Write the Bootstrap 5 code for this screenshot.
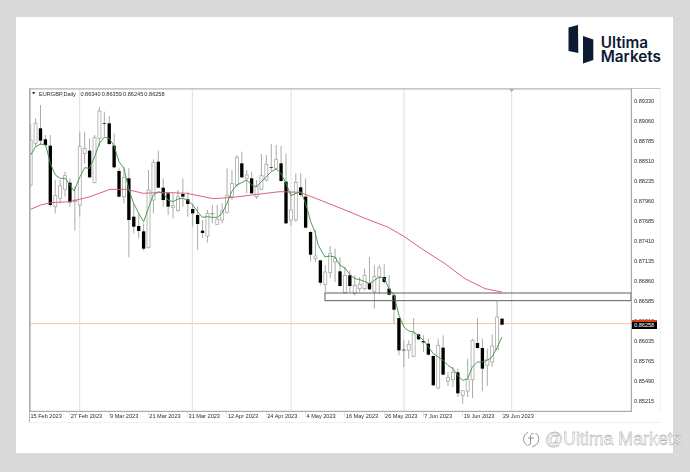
<!DOCTYPE html>
<html lang="en">
<head>
    <meta charset="UTF-8">
    <meta name="viewport" content="width=device-width, initial-scale=1.0">
    <title>EURGBP Daily</title>
    <link href="https://cdn.jsdelivr.net/npm/bootstrap@5.3.0/dist/css/bootstrap.min.css" rel="stylesheet">
    <script src="https://cdn.jsdelivr.net/npm/bootstrap@5.3.0/dist/js/bootstrap.bundle.min.js"></script>
    <style>
        body {
            background: #d9d9d9;
            width: 690px;
            height: 472px;
            overflow: hidden;
            padding: 17px 0 0 16px;
        }
        .sheet {
            width: 657px;
            height: 436px;
            background: #fff;
            padding: 0 12px 0 13px;
        }
        .sheet-head { height: 71px; padding-top: 7px; }
        .logo-name {
            font-family: Inter, "Liberation Sans", sans-serif;
            font-weight: 600;
            font-size: 15.3px;
            line-height: 13.6px;
            color: #0d1a33;
            margin: 12px 0 0 7px;
        }
        .chart-body { height: 324px; filter: blur(0.25px); }
        .chart-svg { display: block; width: 603px; height: 324px; }
        .mt-text {
            font-family: "Liberation Sans", Arial, sans-serif;
            font-size: 5.6px;
            color: #2b2b2b;
            white-space: nowrap;
        }
        .chart-title { position: absolute; left: 10px; top: 2px; line-height: 8px; }
        .chart-title span { margin-right: 1.1px; }
        .title-gap { margin-left: 3.4px; }
        .price-axis {
            width: 29px;
            padding: 3px 0 0 2px;
            border-top: 1px solid #c4c4c4;
            border-right: 1px solid #f2f2f2;
        }
        .price-row { height: 20px; line-height: 19px; }
        .price-tag {
            position: absolute;
            left: 0;
            top: 231px;
            width: 24.5px;
            height: 8.5px;
            background: #000;
            border-top: 2px solid #e2400f;
            color: #fff;
            line-height: 6.5px;
            padding-left: 2px;
        }
        .date-axis {
            height: 11px;
            border-left: 1px solid #b5b5b5;
            border-bottom: 1px solid #f0f0f0;
            width: 632px;
            filter: blur(0.2px);
        }
        .date-cell {
            width: 39.3px;
            height: 5px;
            flex: none;
            line-height: 9px;
            padding-left: 0.4px;
            border-left: 1px solid #e4e4e4;
        }
        .date-cell:first-child { border-left: 0; }
        .watermark {
            position: absolute;
            left: 523px;
            top: 429px;
            gap: 5px;
        }
        .watermark span {
            font-family: "Liberation Sans", Arial, sans-serif;
            font-size: 17.8px;
            line-height: 20px;
            color: #fff;
            -webkit-text-stroke: 0.32px #7a7a7a;
            white-space: nowrap;
        }
    </style>
</head>
<body>
    <div class="sheet">
        <div class="sheet-head d-flex justify-content-end">
            <svg width="26" height="40" viewBox="0 0 26 40">
                <polygon points="0.5,3.5 10,1 10.3,29 0.5,27" fill="#0d1a33"/>
                <polygon points="15,12 25.3,15.5 25.3,36 15,39.5" fill="#0d1a33"/>
            </svg>
            <div class="logo-name">Ultima<br>Markets</div>
        </div>

        <div class="chart-body d-flex">
            <div class="position-relative">
                <svg id="chart" class="chart-svg" viewBox="87 264 1809 972"></svg>
                <div class="chart-title mt-text"><span>EURGBP,Daily</span><span class="title-gap">0.86340</span><span>0.86359</span><span>0.86245</span><span>0.86258</span></div>
            </div>
            <div class="price-axis mt-text flex-grow-1 position-relative">
                <div class="price-row">0.89330</div>
                <div class="price-row">0.89060</div>
                <div class="price-row">0.88785</div>
                <div class="price-row">0.88510</div>
                <div class="price-row">0.88235</div>
                <div class="price-row">0.87960</div>
                <div class="price-row">0.87685</div>
                <div class="price-row">0.87410</div>
                <div class="price-row">0.87135</div>
                <div class="price-row">0.86860</div>
                <div class="price-row">0.86585</div>
                <div class="price-row">0.86310</div>
                <div class="price-row">0.86035</div>
                <div class="price-row">0.85765</div>
                <div class="price-row">0.85490</div>
                <div class="price-row">0.85215</div>
                <div class="price-tag">0.86258</div>
            </div>
        </div>

        <div class="date-axis mt-text d-flex">
            <div class="date-cell">15 Feb 2023</div>
            <div class="date-cell">27 Feb 2023</div>
            <div class="date-cell">9 Mar 2023</div>
            <div class="date-cell">21 Mar 2023</div>
            <div class="date-cell">31 Mar 2023</div>
            <div class="date-cell">12 Apr 2023</div>
            <div class="date-cell">24 Apr 2023</div>
            <div class="date-cell">4 May 2023</div>
            <div class="date-cell">16 May 2023</div>
            <div class="date-cell">26 May 2023</div>
            <div class="date-cell">7 Jun 2023</div>
            <div class="date-cell">19 Jun 2023</div>
            <div class="date-cell">29 Jun 2023</div>
        </div>
    </div>

    <div class="watermark d-flex align-items-center">
        <svg width="17" height="18" viewBox="0 0 17 18" fill="none" stroke="#8a8a8a" stroke-width="0.9">
            <path d="M5 2.5 A7.2 7.2 0 0 0 4.5 15.5 M12.5 3 A7.2 7.2 0 0 1 12 15.5 L9 17"/>
            <path d="M10.5 3.5 C8 3 7.5 5 7.5 7 L7.5 13 C7.5 15 6 15.5 5 14.5 M5 8 L11 8"/>
        </svg>
        <span>@Ultima Markets</span>
    </div>

    <script>
        // hi, body top, body bottom, lo, black?  (coordinates of the 3x reference)
        const candles = [
            [372,420,555,560,0],[355,370,430,440,0],[315,385,422,435,1],[405,418,435,440,1],[405,437,615,620,1],
            [540,587,620,640,0],[540,557,595,610,0],[515,527,568,590,0],[535,548,607,620,1],[560,600,605,692,0],
            [395,440,615,650,0],[395,445,460,490,0],[415,452,532,535,1],[405,413,548,550,0],[322,333,415,440,0],
            [335,370,372,410,1],[348,370,432,435,1],[400,437,502,505,1],[505,513,590,592,1],[500,532,590,610,0],
            [505,535,660,772,1],[610,650,680,700,1],[640,678,693,714,1],[670,694,746,752,1],[510,570,742,746,0],
            [478,487,600,640,0],[452,485,563,565,1],[535,563,600,620,1],[575,580,620,645,1],[580,617,622,655,0],
            [570,590,632,635,0],[535,582,590,620,1],[575,598,612,650,1],[610,627,640,680,1],[620,645,672,749,1],
            [660,692,699,714,1],[630,640,708,728,0],[615,640,642,670,0],[615,658,673,675,0],[610,633,660,670,0],
            [505,587,637,640,0],[510,550,590,600,0],[465,472,555,560,0],[455,490,532,535,1],[510,525,535,580,0],
            [515,535,580,582,1],[540,560,590,597,0],[462,527,568,570,0],[465,493,540,545,0],[432,501,503,515,1],
            [435,478,505,510,0],[438,490,543,545,1],[460,545,670,672,1],[575,630,660,678,0],[520,547,660,665,0],
            [520,562,585,590,1],[535,590,683,685,1],[692,696,764,784,1],[690,768,776,786,0],[781,781,848,856,1],
            [796,816,853,876,0],[738,761,818,835,0],[746,776,786,846,0],[771,814,858,861,1],[801,826,878,881,0],
            [811,826,858,876,1],[826,856,881,886,0],[831,853,866,876,0],[806,826,866,871,0],[771,849,868,871,1],
            [796,829,874,926,0],[794,804,831,881,0],[793,831,846,851,1],[826,866,884,886,1],[881,886,929,971,1],
            [954,954,1051,1066,1],[1021,1049,1051,1101,1],[1021,1033,1051,1076,0],[954,999,1069,1071,0],[1001,1003,1018,1021,1],
            [1006,1023,1027,1056,1],[1016,1031,1064,1066,1],[1066,1068,1156,1158,1],[1016,1036,1164,1166,0],[1006,1043,1124,1126,1],
            [1116,1132,1143,1158,0],[1101,1117,1139,1161,0],[1106,1117,1180,1191,1],[1171,1172,1186,1211,0],[1076,1139,1173,1191,0],
            [1016,1021,1139,1194,0],[954,1029,1044,1046,1],[1016,1044,1106,1174,1],[1046,1078,1096,1158,0],[1003,1038,1086,1101,0],
            [903,951,1048,1051,0],[954,956,974,976,1]
        ];

        const green = "92,465 107,440 122,432 137,435 151,490 166,525 181,535 196,535 210,555 222,573 240,530 254,503 268,505 284,470 298,430 313,412 328,415 343,440 357,485 372,505 387,570 401,610 416,640 431,665 445,625 460,585 475,575 490,580 504,600 519,605 534,597 548,595 563,600 578,615 593,635 607,652 622,650 637,652 652,652 666,640 681,610 695,575 710,555 725,548 740,540 755,555 769,560 784,545 799,530 814,515 828,507 843,520 858,550 873,587 888,580 902,575 917,610 932,665 945,696 955,736 975,771 990,768 1005,771 1020,796 1035,804 1050,824 1065,836 1079,839 1093,844 1108,851 1123,841 1138,831 1153,836 1167,866 1182,886 1197,946 1212,981 1226,993 1241,996 1255,1006 1270,1021 1285,1041 1300,1061 1315,1071 1329,1081 1344,1096 1359,1106 1373,1126 1388,1141 1403,1136 1417,1101 1432,1086 1447,1086 1462,1081 1476,1071 1492,1041 1506,1011";
        const red = "92,628 122,615 151,608 210,605 270,590 330,568 380,568 430,580 490,577 560,580 640,596 700,592 780,582 840,575 900,577 960,600 1035,630 1095,655 1165,682 1210,708 1265,746 1335,791 1395,836 1455,866 1505,876";

        let svg = "";
        // separators and order levels
        [239,577,873,1212,1535].forEach(x => {
            svg += `<line x1="${x}" y1="268" x2="${x}" y2="1233" stroke="#b4b4b4" stroke-width="2.6" stroke-dasharray="3 3"/>`;
        });
        svg += `<polygon points="1527,267 1543,267 1535,276" fill="#b0b0b0"/>`;
        svg += `<line x1="92" y1="971" x2="1893" y2="971" stroke="#f3c6a6" stroke-width="3"/>`;

        candles.forEach((c, i) => {
            const x = (92 + i * 14.73).toFixed(1);
            svg += `<line x1="${x}" y1="${c[0]}" x2="${x}" y2="${c[3]}" stroke="#9c9c9c" stroke-width="2.6"/>`;
            if (c[4]) {
                svg += `<rect x="${x - 5}" y="${c[1]}" width="10" height="${c[2] - c[1]}" fill="#000"/>`;
            } else {
                svg += `<rect x="${x - 4.5}" y="${c[1]}" width="9" height="${c[2] - c[1]}" fill="#fff" stroke="#a8a8a8" stroke-width="2.4"/>`;
            }
        });

        svg += `<polyline points="${red}" fill="none" stroke="#d9557a" stroke-width="2.8"/>`;
        svg += `<polyline points="${green}" fill="none" stroke="#3f9447" stroke-width="2.8"/>`;
        svg += `<rect x="975" y="879" width="918" height="23" fill="none" stroke="#5f5f5f" stroke-width="3"/>`;
        // plot frame
        svg += `<line x1="89.5" y1="265" x2="89.5" y2="1236" stroke="#adadad" stroke-width="5"/>`;
        svg += `<line x1="87" y1="266.5" x2="1895" y2="266.5" stroke="#b4b4b4" stroke-width="4"/>`;
        svg += `<line x1="1894" y1="265" x2="1894" y2="1236" stroke="#9a9a9a" stroke-width="3"/>`;
        svg += `<line x1="90" y1="1234" x2="1895" y2="1234" stroke="#9a9a9a" stroke-width="3"/>`;
        svg += `<polygon points="96,277 106,277 101,283" fill="#000"/>`;
        document.getElementById("chart").innerHTML = svg;
    </script>
</body>
</html>
